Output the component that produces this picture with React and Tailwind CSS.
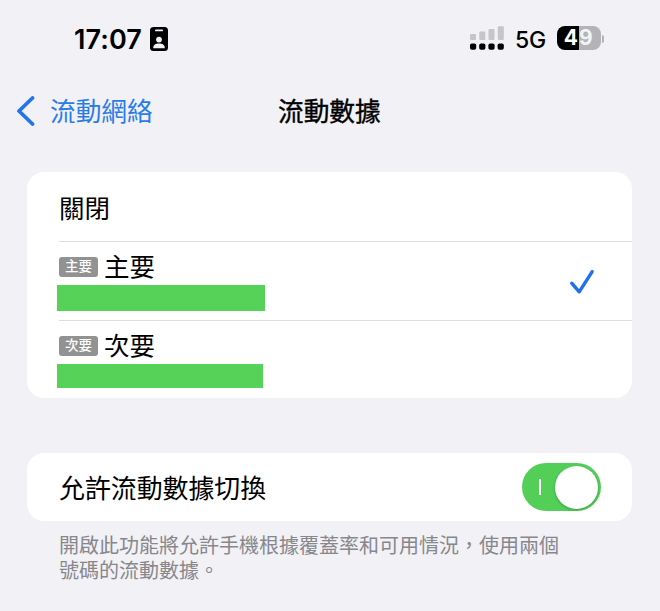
import React from 'react';

const StatusBar = () => (
  <div className="flex h-[78px] items-center pl-[74px] pr-[56px]">
    <span className="w-[69px] whitespace-nowrap font-['Inter'] text-[27px] font-semibold leading-none tracking-[0.1px]">
      17:07
    </span>
    {/* ID badge */}
    <svg className="ml-[7px]" width="18" height="24" viewBox="0 0 18 24">
      <rect width="18" height="24" rx="3.5" fill="#000" />
      <rect x="5" y="2.4" width="8" height="1.9" rx="0.9" fill="#f1f1f6" />
      <circle cx="9" cy="12.6" r="2.9" fill="#f1f1f6" />
      <path d="M3.2 21.2c0-3.4 2.4-4.8 5.8-4.8s5.8 1.4 5.8 4.8z" fill="#f1f1f6" />
    </svg>
    <div className="ml-auto flex items-center">
      {/* Signal */}
      <svg className="-mt-[2px]" width="36" height="24" viewBox="0 0 36 24">
        <g fill="#c5c5ca">
          <rect x="0" y="8" width="6" height="6" rx="1" />
          <rect x="9.3" y="5.5" width="6" height="8.5" rx="1" />
          <rect x="18.5" y="3" width="6" height="11" rx="1" />
          <rect x="27.8" y="0.3" width="6" height="13.7" rx="1" />
        </g>
        <g fill="#000">
          <rect x="0" y="17.5" width="6.2" height="6.2" rx="1.8" />
          <rect x="9.2" y="17.5" width="6.2" height="6.2" rx="1.8" />
          <rect x="18.4" y="17.5" width="6.2" height="6.2" rx="1.8" />
          <rect x="27.6" y="17.5" width="6.2" height="6.2" rx="1.8" />
        </g>
      </svg>
      <span className="ml-[9px] mt-[2px] w-[32px] whitespace-nowrap font-['Inter'] text-[23px] font-medium leading-none tracking-[-0.3px]">
        5G
      </span>
      {/* Battery */}
      <div className="ml-[10px] mt-[-2px] flex h-6 w-11 overflow-hidden rounded-[8px] font-['Inter'] text-[21px] font-bold leading-6 text-white">
        <span className="w-[22px] bg-black pr-px text-right">4</span>
        <span className="w-[22px] bg-[#b4b4b8] text-[#f3f3f5]">9</span>
      </div>
      <div className="ml-[1px] h-2 w-[2px] rounded-r-full bg-[#b4b4b8]" />
    </div>
  </div>
);

const SimRow = ({ label, barClass, selected }) => (
  <div className="flex items-center">
    <div>
      <div className="flex items-center">
        <span className="-mt-[2px] h-5 w-[39px] rounded-[3px] bg-[#929292] text-center text-[13.5px] font-medium leading-[20px] text-white">
          {label}
        </span>
        <span className="-mt-[2px] ml-[6px] text-[25.5px] leading-[32px]">{label}</span>
      </div>
      <div className={barClass} />
    </div>
    {selected && (
      <svg className="ml-auto mr-[37px]" width="26" height="26" viewBox="0 0 26 26" fill="none">
        <path
          d="M2.7 14.2l7.5 8.6L23.2 2.6"
          stroke="#2170ee"
          strokeWidth="3.4"
          strokeLinecap="round"
          strokeLinejoin="round"
        />
      </svg>
    )}
  </div>
);

const Toggle = () => (
  <div className="flex h-12 w-[79px] items-center rounded-full bg-[#53cf58] pl-[17px] pr-[3px]">
    <div className="h-4 w-[1.5px] bg-white" />
    <div className="ml-auto h-[43px] w-[43px] rounded-full bg-white shadow-[0_1px_3px_rgba(0,0,0,0.25)]" />
  </div>
);

const App = () => {
  return (
    <div className="h-[611px] w-[660px] overflow-hidden bg-[#f1f1f6] font-['Liberation_Sans','Noto_Sans_CJK_TC',sans-serif] text-black">
      <StatusBar />

      {/* Nav bar */}
      <div className="flex h-[66px] items-center text-[25.7px] leading-none">
        <div className="flex w-[278px] items-center pl-[16px] text-[#2b7ce9]">
          <svg width="20" height="30" viewBox="0 0 20 30" fill="none">
            <path
              d="M16.5 2L3 15l13.5 13"
              stroke="#2474ed"
              strokeWidth="3.8"
              strokeLinecap="round"
              strokeLinejoin="round"
            />
          </svg>
          <span className="ml-[14px] pt-[4px]">流動網絡</span>
        </div>
        <span className="pt-[4px] [-webkit-text-stroke:0.4px_black]">流動數據</span>
      </div>

      <div className="ml-[27px] mt-7 h-[226px] w-[605px] rounded-[17px] bg-white pl-8">
        <div className="flex h-[70px] items-center border-b border-[#dedee1] pt-[6px] text-[25.5px]">關閉</div>
        <div className="h-[79px] border-b border-[#dedee1] pt-[11px]">
          <SimRow label="主要" barClass="-ml-[2px] mt-[2px] h-[26px] w-[208px] bg-[#57d259]" selected />
        </div>
        <div className="pt-[11px]">
          <SimRow label="次要" barClass="-ml-[2px] mt-[2px] h-[24px] w-[206px] bg-[#57d259]" />
        </div>
      </div>

      <div className="ml-[27px] mt-[55px] flex h-[68px] w-[605px] items-center justify-between rounded-[17px] bg-white pl-8 pr-[31px]">
        <span className="pt-[4px] text-[25.9px]">允許流動數據切換</span>
        <Toggle />
      </div>
      <p className="ml-[59px] mt-[13px] w-[510px] text-[20px] leading-[25px] text-[#87878c]">
        開啟此功能將允許手機根據覆蓋率和可用情況，使用兩個
        <br />
        號碼的流動數據。
      </p>
    </div>
  );
};

export default App;
